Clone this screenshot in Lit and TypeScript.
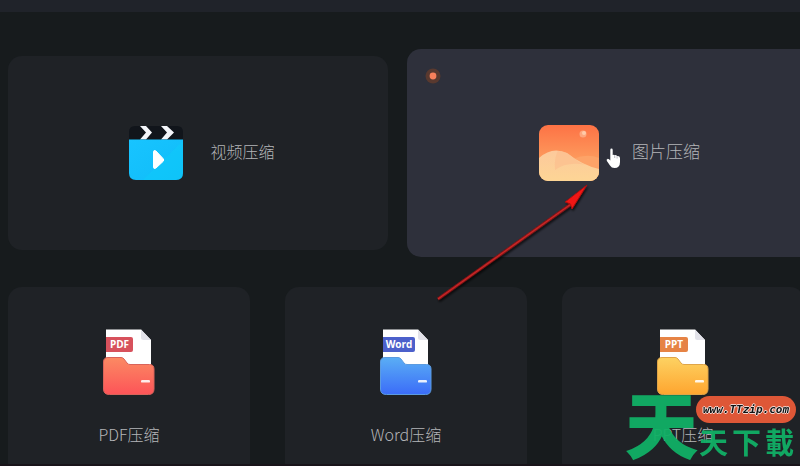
import { LitElement, html, css, svg } from "lit";
import { customElement } from "lit/decorators.js";

interface DocKind {
  id: string;
  label: string;
  top: string;
  bottom: string;
  rim: string;
  tag: string;
  tagWidth: number;
}

const DOCS: DocKind[] = [
  { id: "PDF", label: "PDF压缩", top: "#fb8a63", bottom: "#fd5458", rim: "#d9635a", tag: "#d7515c", tagWidth: 27 },
  { id: "Word", label: "Word压缩", top: "#5aaef5", bottom: "#3b6cf8", rim: "#5b9be0", tag: "#4c60cb", tagWidth: 32 },
  { id: "PPT", label: "PPT压缩", top: "#fdd262", bottom: "#fea52f", rim: "#e0a548", tag: "#e68345", tagWidth: 28 },
];

const docIcon = (d: DocKind) => svg`
  <svg class="doc" viewBox="0 0 52 66" aria-hidden="true">
    <defs>
      <linearGradient id="f-${d.id}" x1="0" y1="0" x2="0" y2="1">
        <stop offset="0" stop-color=${d.top} />
        <stop offset="1" stop-color=${d.bottom} />
      </linearGradient>
    </defs>
    <path d="M3 .5H38L48 11V50H3Z" fill="#fff" />
    <path d="M38 .5L48 11H40.500Q38 11 38 8.500Z" fill="#e3e3ea" />
    <path d="M3 8H${d.tagWidth + 1}Q${d.tagWidth + 3} 8 ${d.tagWidth + 3} 10V21Q${d.tagWidth + 3} 23 ${d.tagWidth + 1} 23H3Z" fill=${d.tag} />
    <text x=${(d.tagWidth + 6) / 2} y="19" text-anchor="middle" class="tag">${d.id}</text>
    <path d="M5 28.500H18Q20 28.500 21 30L24 34Q25 35.500 27 35.500H46.500Q51 35.500 51 40V60Q51 65.500 45.500 65.500H6.500Q.5 65.500 .5 60V33Q.5 28.500 5 28.500Z"
      fill="url(#f-${d.id})" stroke=${d.rim} stroke-width="1" />
    <rect x="38" y="51" width="9" height="2.600" rx="1.200" fill="#fff" opacity=".88" />
  </svg>`;

@customElement("app-root")
export class AppRoot extends LitElement {
  static styles = css`
    :host {
      display: block;
      position: relative;
      height: 100vh;
      overflow: hidden;
      background: #171b1d;
      font-family: "Noto Sans", "Noto Sans CJK SC", sans-serif;
    }
    .bar {
      height: 12px;
      background: #20232a;
    }
    main {
      padding: 37px 0 0 8px;
    }
    .card {
      display: flex;
      align-items: center;
      border: 0;
      margin: 0;
      padding: 0;
      background: #1f2226;
      color: #b4b5b8;
      font: 300 16px/24px "Noto Sans CJK SC", sans-serif;
      cursor: pointer;
    }
    .media {
      display: grid;
      grid-template-columns: 380fr 393fr;
      gap: 19px;
      align-items: center;
    }
    .wide {
      position: relative;
      justify-content: center;
      height: 194px;
      border-radius: 14px;
      gap: 27px;
      padding-left: 8px;
    }
    .wide span {
      padding-bottom: 4px;
    }
    .active {
      height: 208px;
      border-radius: 14px 0 0 14px;
      background: #2e303b;
      gap: 33px;
      font-size: 17px;
      padding-left: 32px;
    }
    .dot {
      position: absolute;
      left: 18px;
      top: 19px;
      width: 16px;
      height: 16px;
    }
    .video {
      width: 54px;
      height: 56px;
    }
    .photo {
      width: 60px;
      height: 56px;
    }
    .docs {
      display: grid;
      grid-template-columns: repeat(3, 1fr);
      gap: 35px;
      margin-top: 30px;
      margin-right: -4px;
    }
    .tile {
      flex-direction: column;
      height: 190px;
      border-radius: 14px;
      padding-top: 42px;
      gap: 27px;
    }
    .doc {
      width: 52px;
      height: 66px;
      flex: none;
    }
    .tag {
      font: 700 10px "Open Sans", sans-serif;
      fill: #fff;
    }
    .foot {
      position: absolute;
      left: 0;
      right: 0;
      bottom: 0;
      height: 2px;
      background: #19141a;
    }
    .arrow {
      position: absolute;
      left: 430px;
      top: 178px;
      width: 170px;
      height: 130px;
      pointer-events: none;
    }
    .hand {
      position: absolute;
      left: 606px;
      top: 148px;
      width: 15px;
      height: 21px;
      pointer-events: none;
    }
    .mark {
      position: absolute;
      right: 4px;
      bottom: 0;
      width: 170px;
      height: 82px;
      color: #11b066;
      font-family: "Noto Sans CJK SC", sans-serif;
      font-weight: 700;
      opacity: 0.95;
    }
    .big {
      position: absolute;
      left: 0;
      bottom: 4px;
      font-size: 71px;
      line-height: 82px;
      -webkit-text-stroke: 2px #11b066;
    }
    .small {
      position: absolute;
      right: 2px;
      bottom: 5px;
      display: flex;
      gap: 4px;
      font-size: 29px;
      line-height: 40px;
    }
    .url {
      position: absolute;
      right: 0;
      top: 12px;
      width: 100px;
      height: 27px;
      border-radius: 14px;
      background: #e95a38;
      color: #111;
      text-align: center;
      text-decoration: none;
      font: italic 700 11px/28px "DejaVu Sans Mono", monospace;
      text-shadow: 1px 0 #fffc, -1px 0 #fffc, 0 1px #fffc, 0 -1px #fffc;
    }
  `;

  render() {
    return html`
      <header class="bar"></header>
      <main>
        <section class="media">
          <button class="card wide">
            <svg class="video" viewBox="0 0 54 56" aria-hidden="true">
              <defs>
                <linearGradient id="v" x1="0" y1="0" x2="1" y2="1">
                  <stop offset="0" stop-color="#18c4ff" />
                  <stop offset="1" stop-color="#10bcf8" />
                </linearGradient>
              </defs>
              <path d="M6 1H48Q54 1 54 7V15H0V7Q0 1 6 1Z" fill="#11151b" />
              <path d="M11 1H17L23 7.500L17 14.500H11L17 7.500ZM32 1H38L45 7.500L38 14.500H32L38 7.500Z" fill="#f4f6fa" />
              <path d="M0 14.500H54V48Q54 55 47 55H7Q0 55 0 48Z" fill="url(#v)" />
              <path d="M54 16V48Q54 55 47 55H14Z" fill="#0cd0fa" opacity=".4" />
              <path d="M27 26L34 33.500Q35.500 35 34 36.500L27 43Q24.500 44.500 24.500 42V27Q24.500 24.500 27 26Z" fill="#fff" stroke="#fff" />
            </svg>
            <span>视频压缩</span>
          </button>
          <button class="card wide active">
            <svg class="dot" viewBox="0 0 16 16" aria-hidden="true">
              <circle cx="8" cy="8" r="7.500" fill="#59392f" />
              <circle cx="8" cy="8" r="3.400" fill="#f8805b" />
            </svg>
            <svg class="photo" viewBox="0 0 60 56" aria-hidden="true">
              <defs>
                <linearGradient id="p" x1="0" y1="0" x2="0" y2="1">
                  <stop offset="0" stop-color="#fd7245" />
                  <stop offset="1" stop-color="#fdb46c" />
                </linearGradient>
                <linearGradient id="q" x1="0" y1="0" x2="0" y2="1">
                  <stop offset="0" stop-color="#fcc99c" />
                  <stop offset="1" stop-color="#fdd595" />
                </linearGradient>
                <clipPath id="c"><rect width="60" height="56" rx="9" /></clipPath>
              </defs>
              <g clip-path="url(#c)">
                <rect width="60" height="56" fill="url(#p)" />
                <path d="M34 34Q48 28 60 33V56H34Z" fill="#fda368" />
                <path d="M0 33Q13 21 28 28Q43 40 60 44V56H0Z" fill="url(#q)" />
                <path d="M16 45Q15 32 19 26Q26 26 31 30Q40 38 47 40Q28 36 16 45Z" fill="#fbbd8c" opacity=".6" />
                <circle cx="44" cy="9" r="3.500" fill="#fda77e" />
                <circle cx="45" cy="8" r="2" fill="#fecaa9" />
              </g>
            </svg>
            <span>图片压缩</span>
          </button>
        </section>
        <section class="docs">
          ${DOCS.map((d) => html`<button class="card tile">${docIcon(d)}<span>${d.label}</span></button>`)}
        </section>
      </main>
      <div class="foot"></div>
      <svg class="arrow" viewBox="0 0 170 130" aria-hidden="true">
        <defs>
          <filter id="s" x="-10%" y="-10%" width="120%" height="125%">
            <feDropShadow dx="1" dy="2" stdDeviation="1.200" flood-color="#000" flood-opacity=".7" />
          </filter>
        </defs>
        <g filter="url(#s)">
          <path d="M8 121L144 24" stroke="#8c1416" stroke-width="3" />
          <path d="M8 121L144 24" stroke="#c62a29" stroke-width="1.300" />
          <path d="M157 7L142 31L140.500 26L135 24Z" fill="#f01512" />
          <path d="M157 7L142 31L140.500 26L135 24Z" fill="none" stroke="#a80f10" stroke-width=".8" />
        </g>
      </svg>
      <svg class="hand" viewBox="0 0 15 21" aria-hidden="true">
        <path d="M4.300 2Q4.300.6 5.500.6T6.700 2V7Q8 6.300 8.700 7.300Q10.200 6.700 11 8Q13.800 7.500 14 10V14Q14 20 8.500 20Q5.500 20 4 17.500L.9 13Q0 11.400 1.500 10.900Q2.900 10.600 4.300 12.600Z" fill="#fff" />
        <path d="M8.700 7.500V10M11.100 8.200V10.500" stroke="#8a8c98" stroke-width=".6" />
      </svg>
      <div class="mark">
        <span class="big">天</span>
        <span class="small"><span>天</span><span>下</span><span>載</span></span>
        <a class="url" href="#">www.TTzip.com</a>
      </div>
    `;
  }
}
